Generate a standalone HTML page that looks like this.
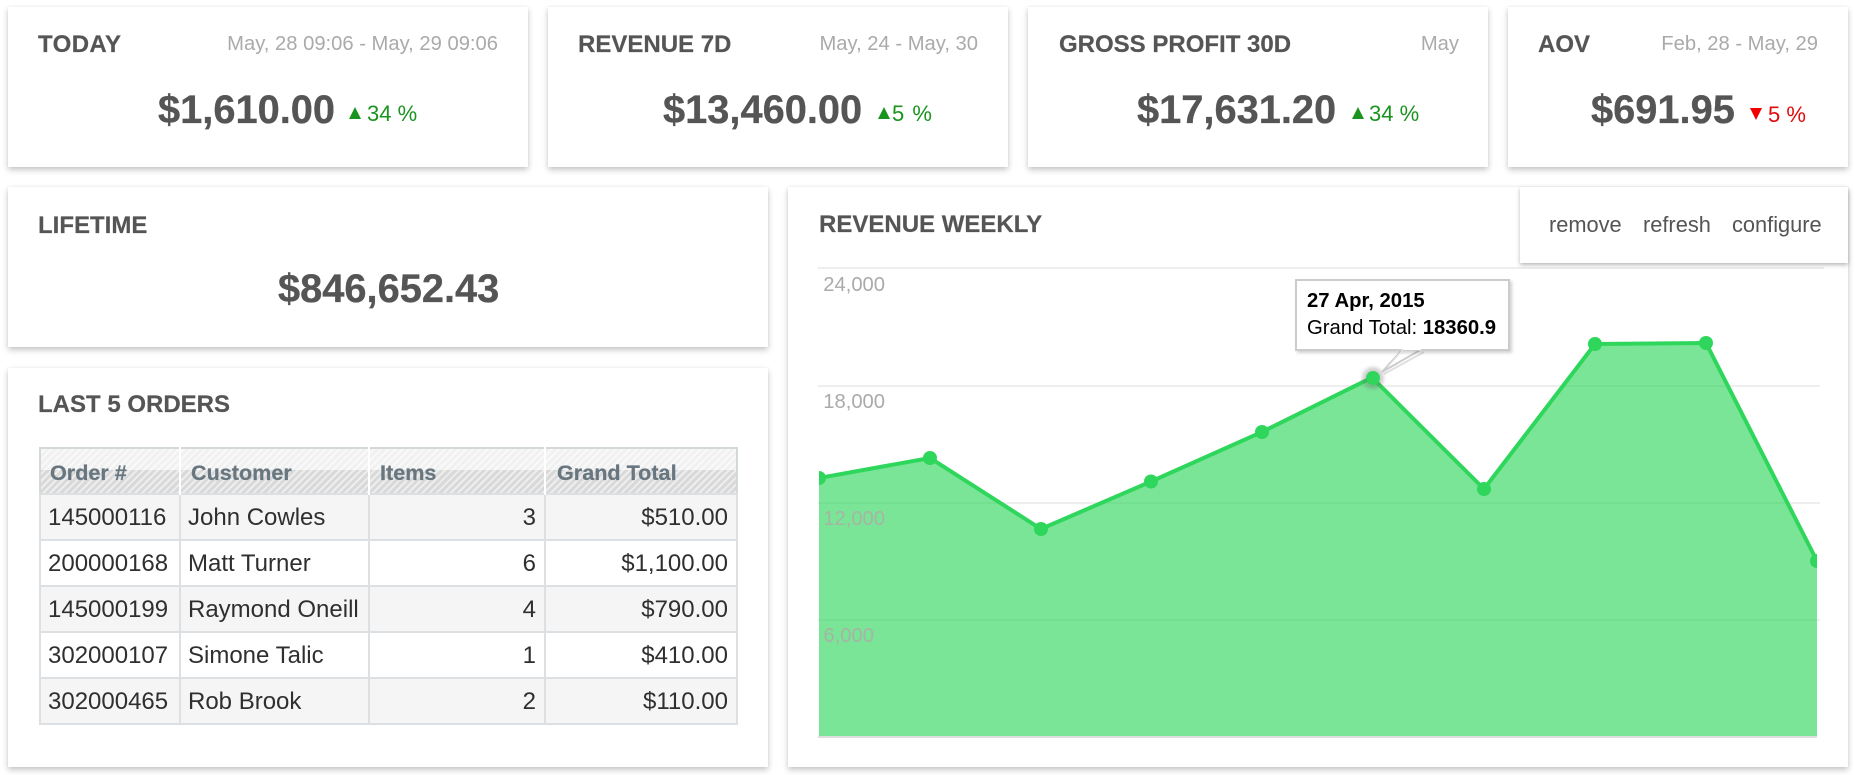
<!DOCTYPE html>
<html><head><meta charset="utf-8"><title>Dashboard</title>
<style>
html,body{margin:0;padding:0;background:#fff;width:1855px;height:775px;overflow:hidden}
body{font-family:"Liberation Sans",Arial,sans-serif;position:relative;color:#555}
.c{position:absolute;background:#fff;box-shadow:0 3px 6px rgba(0,0,0,.22),0 0 3px rgba(0,0,0,.06)}
.t{position:absolute;white-space:nowrap}
.h{font-size:24px;font-weight:bold;line-height:28px;color:#555;-webkit-text-stroke:.2px #555}
.d{font-size:20.2px;line-height:24px;color:#aaa;text-align:right}
.v{font-size:39.8px;font-weight:bold;line-height:46px;color:#555;-webkit-text-stroke:.3px #555}
.p{font-size:22px;line-height:26px}
.g{color:#1a941f}.r{color:#e00b0b}
.up,.dn{position:absolute;width:0;height:0;border-left:6.5px solid transparent;border-right:6.5px solid transparent}
.up{border-bottom:12px solid #1a941f}
.dn{border-top:12px solid #f00000}
table{position:absolute;left:39px;top:447px;width:697px;height:277px;border-collapse:collapse;table-layout:fixed;font-size:24px;color:#2f2f2f;border:2px solid #d3d8d8}
td,th{border:2px solid #dce0e2;padding:1px 8px 0;height:46px;box-sizing:border-box;white-space:nowrap;overflow:hidden}
th{height:46px;text-align:left;font-size:21.6px;color:#67767f;padding:4px 0 0 10px;border:0;border-right:2px solid #fff;-webkit-text-stroke:.2px #67767f;
background:repeating-linear-gradient(-45deg,rgba(255,255,255,.55) 0 2px,rgba(255,255,255,0) 2px 5px),linear-gradient(#f1f1f1 0,#f1f1f1 48%,#d9d9d9 48%,#d9d9d9 100%)}
tr.o td{background:#f5f5f5}
td.n{text-align:right}
td.a{padding-left:7px}
.m{position:absolute;left:1520px;top:187px;width:328px;height:76px;background:#fff;box-shadow:0 2px 4px rgba(0,0,0,.28)}
.m span{position:absolute;top:26px;font-size:21.8px;line-height:24px;color:#555}
.tip{position:absolute;left:1295px;top:279px;width:215px;height:72px;box-sizing:border-box;background:#fff;border:2px solid #ccc;box-shadow:2px 2px 3px rgba(0,0,0,.18);color:#000;font-size:20.3px;line-height:27px;padding:7px 0 0 10px;white-space:nowrap}
</style></head><body>

<div class="c" style="left:8px;top:7px;width:520px;height:160px"></div>
<div class="c" style="left:548px;top:7px;width:460px;height:160px"></div>
<div class="c" style="left:1028px;top:7px;width:460px;height:160px"></div>
<div class="c" style="left:1508px;top:7px;width:340px;height:160px"></div>
<div class="c" style="left:8px;top:187px;width:760px;height:160px"></div>
<div class="c" style="left:8px;top:368px;width:760px;height:399px"></div>
<div class="c" style="left:788px;top:187px;width:1060px;height:580px"></div>

<span class="t h" style="left:38px;top:31px;letter-spacing:.4px">TODAY</span>
<span class="t d" style="right:1357px;top:32px">May, 28 09:06 - May, 29 09:06</span>
<span class="t v" style="left:158px;top:87px">$1,610.00</span>
<i class="up" style="left:349px;top:107px"></i>
<span class="t p g" style="left:367px;top:101px">34 %</span>

<span class="t h" style="left:578px;top:31px">REVENUE 7D</span>
<span class="t d" style="right:877px;top:32px">May, 24 - May, 30</span>
<span class="t v" style="left:663px;top:87px">$13,460.00</span>
<i class="up" style="left:878px;top:107px"></i>
<span class="t p g" style="left:892px;top:101px;word-spacing:2px">5 %</span>

<span class="t h" style="left:1059px;top:31px">GROSS PROFIT 30D</span>
<span class="t d" style="right:396px;top:32px">May</span>
<span class="t v" style="left:1137px;top:87px">$17,631.20</span>
<i class="up" style="left:1352px;top:107px"></i>
<span class="t p g" style="left:1369px;top:101px">34 %</span>

<span class="t h" style="left:1538px;top:31px">AOV</span>
<span class="t d" style="right:37px;top:32px">Feb, 28 - May, 29</span>
<span class="t v" style="left:1591px;top:87px">$691.95</span>
<i class="dn" style="left:1750px;top:108px"></i>
<span class="t p r" style="left:1768px;top:102px">5 %</span>

<span class="t h" style="left:38px;top:212px">LIFETIME</span>
<span class="t v" style="left:278px;top:266px">$846,652.43</span>

<span class="t h" style="left:38px;top:391px">LAST 5 ORDERS</span>
<table>
<colgroup><col style="width:140px"><col style="width:189px"><col style="width:176px"><col style="width:192px"></colgroup>
<tr><th style="padding-left:9px">Order #</th><th>Customer</th><th>Items</th><th style="border-right:0;padding-left:11px">Grand Total</th></tr>
<tr class="o"><td class="a">145000116</td><td class="a">John Cowles</td><td class="n">3</td><td class="n">$510.00</td></tr>
<tr><td class="a">200000168</td><td class="a">Matt Turner</td><td class="n">6</td><td class="n">$1,100.00</td></tr>
<tr class="o"><td class="a">145000199</td><td class="a">Raymond Oneill</td><td class="n">4</td><td class="n">$790.00</td></tr>
<tr><td class="a">302000107</td><td class="a">Simone Talic</td><td class="n">1</td><td class="n">$410.00</td></tr>
<tr class="o"><td class="a">302000465</td><td class="a">Rob Brook</td><td class="n">2</td><td class="n">$110.00</td></tr>
</table>

<span class="t h" style="left:819px;top:211px">REVENUE WEEKLY</span>

<svg style="position:absolute;left:0;top:0" width="1855" height="775" viewBox="0 0 1855 775">
<defs><clipPath id="pl"><rect x="819" y="260" width="998" height="480"/></clipPath></defs>
<g stroke="#eeeeee" stroke-width="2">
<line x1="818" y1="268" x2="1824" y2="268"/>
<line x1="818" y1="386" x2="1820" y2="386"/>
<line x1="818" y1="503" x2="1820" y2="503"/>
<line x1="818" y1="620" x2="1820" y2="620"/>
<line x1="818" y1="737" x2="1817" y2="737" stroke="#dddddd"/>
</g>
<g clip-path="url(#pl)">
<polygon fill="#2fd65c" fill-opacity=".64" points="819,736 819,478 930,458 1041,529 1151,481.5 1262,432 1372,377.5 1484,489 1595,344 1706,343 1817,561 1817,736"/>
<polyline fill="none" stroke="#2fd65c" stroke-width="4" points="819,478 930,458 1041,529 1151,481.5 1262,432 1372,377.5 1484,489 1595,344 1706,343 1817,561"/>
<g fill="#2fd65c">
<circle cx="819" cy="478" r="7"/><circle cx="930" cy="458" r="7"/><circle cx="1041" cy="529" r="7"/>
<circle cx="1151" cy="481.5" r="7"/><circle cx="1262" cy="432" r="7"/>
<circle cx="1484" cy="489" r="7"/><circle cx="1595" cy="344" r="7"/><circle cx="1706" cy="343" r="7"/><circle cx="1817" cy="561" r="7"/>
</g>
<circle cx="1373" cy="378" r="11" fill="#666" fill-opacity=".3" style="filter:blur(1.5px)"/>
<circle cx="1373" cy="378" r="7" fill="#2fd65c"/>
</g>
<g font-family="Liberation Sans, Arial, sans-serif" font-size="20.2" text-anchor="end">
<text x="885" y="291" fill="#aaaaaa">24,000</text>
<text x="885" y="408" fill="#aaaaaa">18,000</text>
<text x="885" y="525" fill="#a6b4a6">12,000</text>
<text x="874" y="642" fill="#a6b4a6">6,000</text>
</g>
<polygon points="1382,372 1403,349 1422,349" fill="#fff" stroke="#ccc" stroke-width="2"/>
<line x1="1384" y1="374" x2="1424" y2="352" stroke="#000" stroke-opacity=".12" stroke-width="2"/>
</svg>
<div class="tip"><b>27 Apr, 2015</b><br>Grand Total: <b>18360.9</b></div>
<svg style="position:absolute;left:1380px;top:345px" width="50" height="30" viewBox="0 0 50 30"><polygon points="4.5,25 23,5 41,5 41,4 23,4" fill="#fff"/></svg>

<div class="m">
<span style="left:29px">remove</span>
<span style="left:123px">refresh</span>
<span style="left:212px">configure</span>
</div>
</body></html>
